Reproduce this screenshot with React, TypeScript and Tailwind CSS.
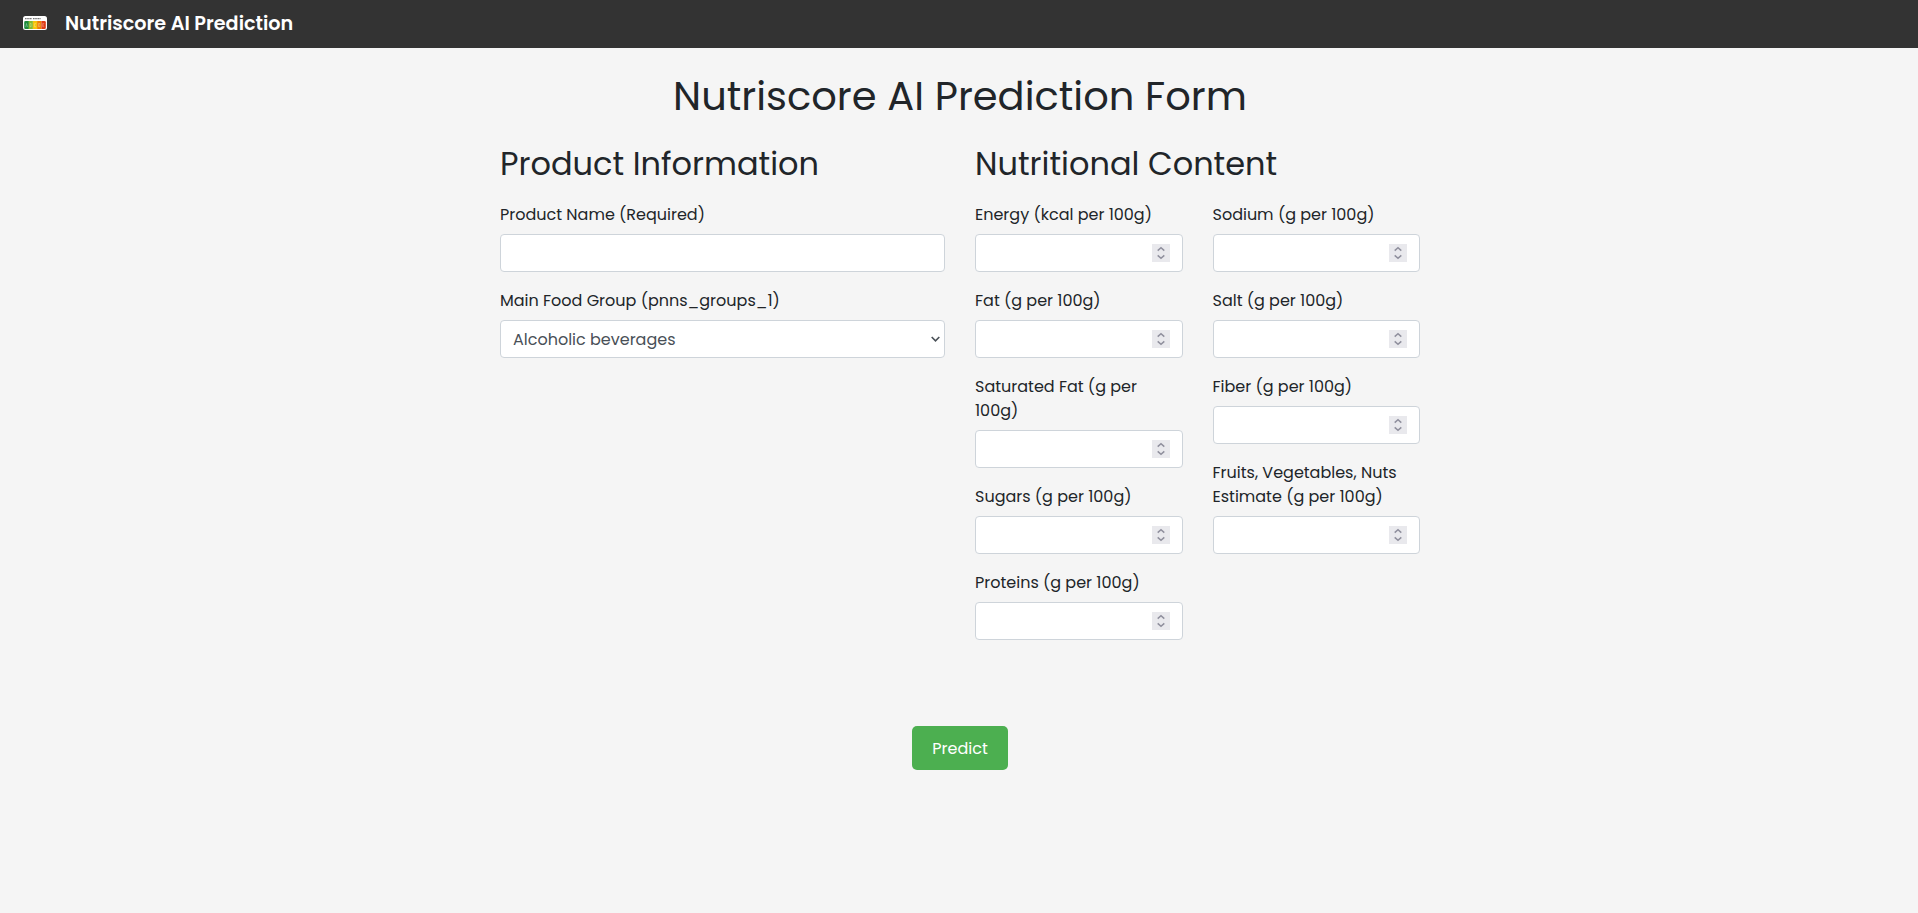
type Item = { id: string; label: string };

const leftFields: Item[] = [
  { id: "energy", label: "Energy (kcal per 100g)" },
  { id: "fat", label: "Fat (g per 100g)" },
  { id: "saturated-fat", label: "Saturated Fat (g per 100g)" },
  { id: "sugars", label: "Sugars (g per 100g)" },
  { id: "proteins", label: "Proteins (g per 100g)" },
];

const rightFields: Item[] = [
  { id: "sodium", label: "Sodium (g per 100g)" },
  { id: "salt", label: "Salt (g per 100g)" },
  { id: "fiber", label: "Fiber (g per 100g)" },
  { id: "fruits", label: "Fruits, Vegetables, Nuts Estimate (g per 100g)" },
];

const labelStyle = "mb-[7px] block pt-px";
const heading = "mb-[19px] pt-px text-[32px] leading-[38px]";
const control = "block h-[38px] w-full rounded border border-[#ced4da] bg-white px-3 pt-0.5 text-[#495057] outline-none";

function Logo() {
  return (
    <svg className="h-[14px] w-6" viewBox="0 0 24 14" aria-hidden="true">
      <rect width="24" height="14" rx="2.5" fill="#fff" />
      <path d="M2 2.6h7M10 2.6h8" stroke="#777" strokeWidth="1.4" strokeDasharray="1.2 0.4" />
      <path d="M2.5 5H6v8H2.5A1.3 1.3 0 0 1 1.2 11.7V6.3A1.3 1.3 0 0 1 2.5 5Z" fill="#1d8a3c" />
      <rect x="5.6" y="5" width="4.3" height="8" fill="#85bb2f" />
      <rect x="9.9" y="5" width="4.2" height="8" fill="#f6c40a" />
      <rect x="14.1" y="5" width="4.3" height="8" fill="#ee8100" />
      <path d="M18.4 5h3.1a1.3 1.3 0 0 1 1.3 1.3v5.4a1.3 1.3 0 0 1-1.3 1.3h-3.1Z" fill="#e03a14" />
      <path d="M2.7 11 3.5 7.5 4.5 11M7 7.5v3.2h1.2V7.5ZM13 7.7h-1.6v3H13M15.5 7.5v3.2h1.4V7.5ZM21.2 7.5h-1.5v3.2h1.5M19.7 9.1h1.3" fill="none" stroke="#fff" strokeOpacity="0.35" strokeWidth="0.8" />
    </svg>
  );
}

function Spinner() {
  return (
    <svg className="pointer-events-none absolute top-[10px] right-[13px] size-[18px]" viewBox="0 0 18 18" aria-hidden="true">
      <rect width="18" height="18" fill="#e9e9ed" />
      <path d="M5.7 6.6 9 3.7l3.3 2.9M5.7 11.4 9 14.3l3.3-2.9" fill="none" stroke="#8f8f9d" strokeWidth="1.5" />
    </svg>
  );
}

function NumberField({ item }: { item: Item }) {
  return (
    <div className="mb-4">
      <label htmlFor={item.id} className={labelStyle}>{item.label}</label>
      <div className="relative">
        <input id={item.id} inputMode="decimal" className={control} />
        <Spinner />
      </div>
    </div>
  );
}

export default function App() {
  return (
    <div className="min-h-screen bg-[#f5f5f5] font-[Poppins,Inter,sans-serif] text-base text-[#212529]">
      <nav className="flex h-12 items-center bg-[#333] pb-[2px] pl-[23px] text-white">
        <Logo />
        <span className="ml-[18px] pt-[2px] text-[19.2px] leading-7 font-semibold">Nutriscore AI Prediction</span>
      </nav>
      <main className="pt-6 pl-[2px]">
        <form className="mx-auto w-[920px]">
          <h1 className="mb-6 text-center text-[40px] leading-[48px]">Nutriscore AI Prediction Form</h1>
          <div className="grid grid-cols-2 gap-[30px]">
            <section>
              <h2 className={heading}>Product Information</h2>
              <div className="mb-4">
                <label htmlFor="name" className={labelStyle}>Product Name (Required)</label>
                <input id="name" className={control} />
              </div>
              <div className="mb-4">
                <label htmlFor="group" className={labelStyle}>Main Food Group (pnns_groups_1)</label>
                <div className="relative">
                  <select id="group" className={`${control} appearance-none`}>
                    <option>Alcoholic beverages</option>
                  </select>
                  <svg className="pointer-events-none absolute top-[15px] right-[4px] h-2 w-[11px]" viewBox="0 0 11 8" aria-hidden="true">
                    <path d="M1.7 2 5.5 5.8 9.3 2" fill="none" stroke="#495057" strokeWidth="1.6" />
                  </svg>
                </div>
              </div>
            </section>
            <section>
              <h2 className={heading}>Nutritional Content</h2>
              <div className="grid grid-cols-2 gap-[30px]">
                <div>{leftFields.map((item) => <NumberField key={item.id} item={item} />)}</div>
                <div>{rightFields.map((item) => <NumberField key={item.id} item={item} />)}</div>
              </div>
            </section>
          </div>
          <div className="mt-[70px] flex justify-center">
            <button type="button" className="h-11 w-24 rounded-[5px] bg-[#4caf50] pt-0.5 text-white">Predict</button>
          </div>
        </form>
      </main>
    </div>
  );
}
